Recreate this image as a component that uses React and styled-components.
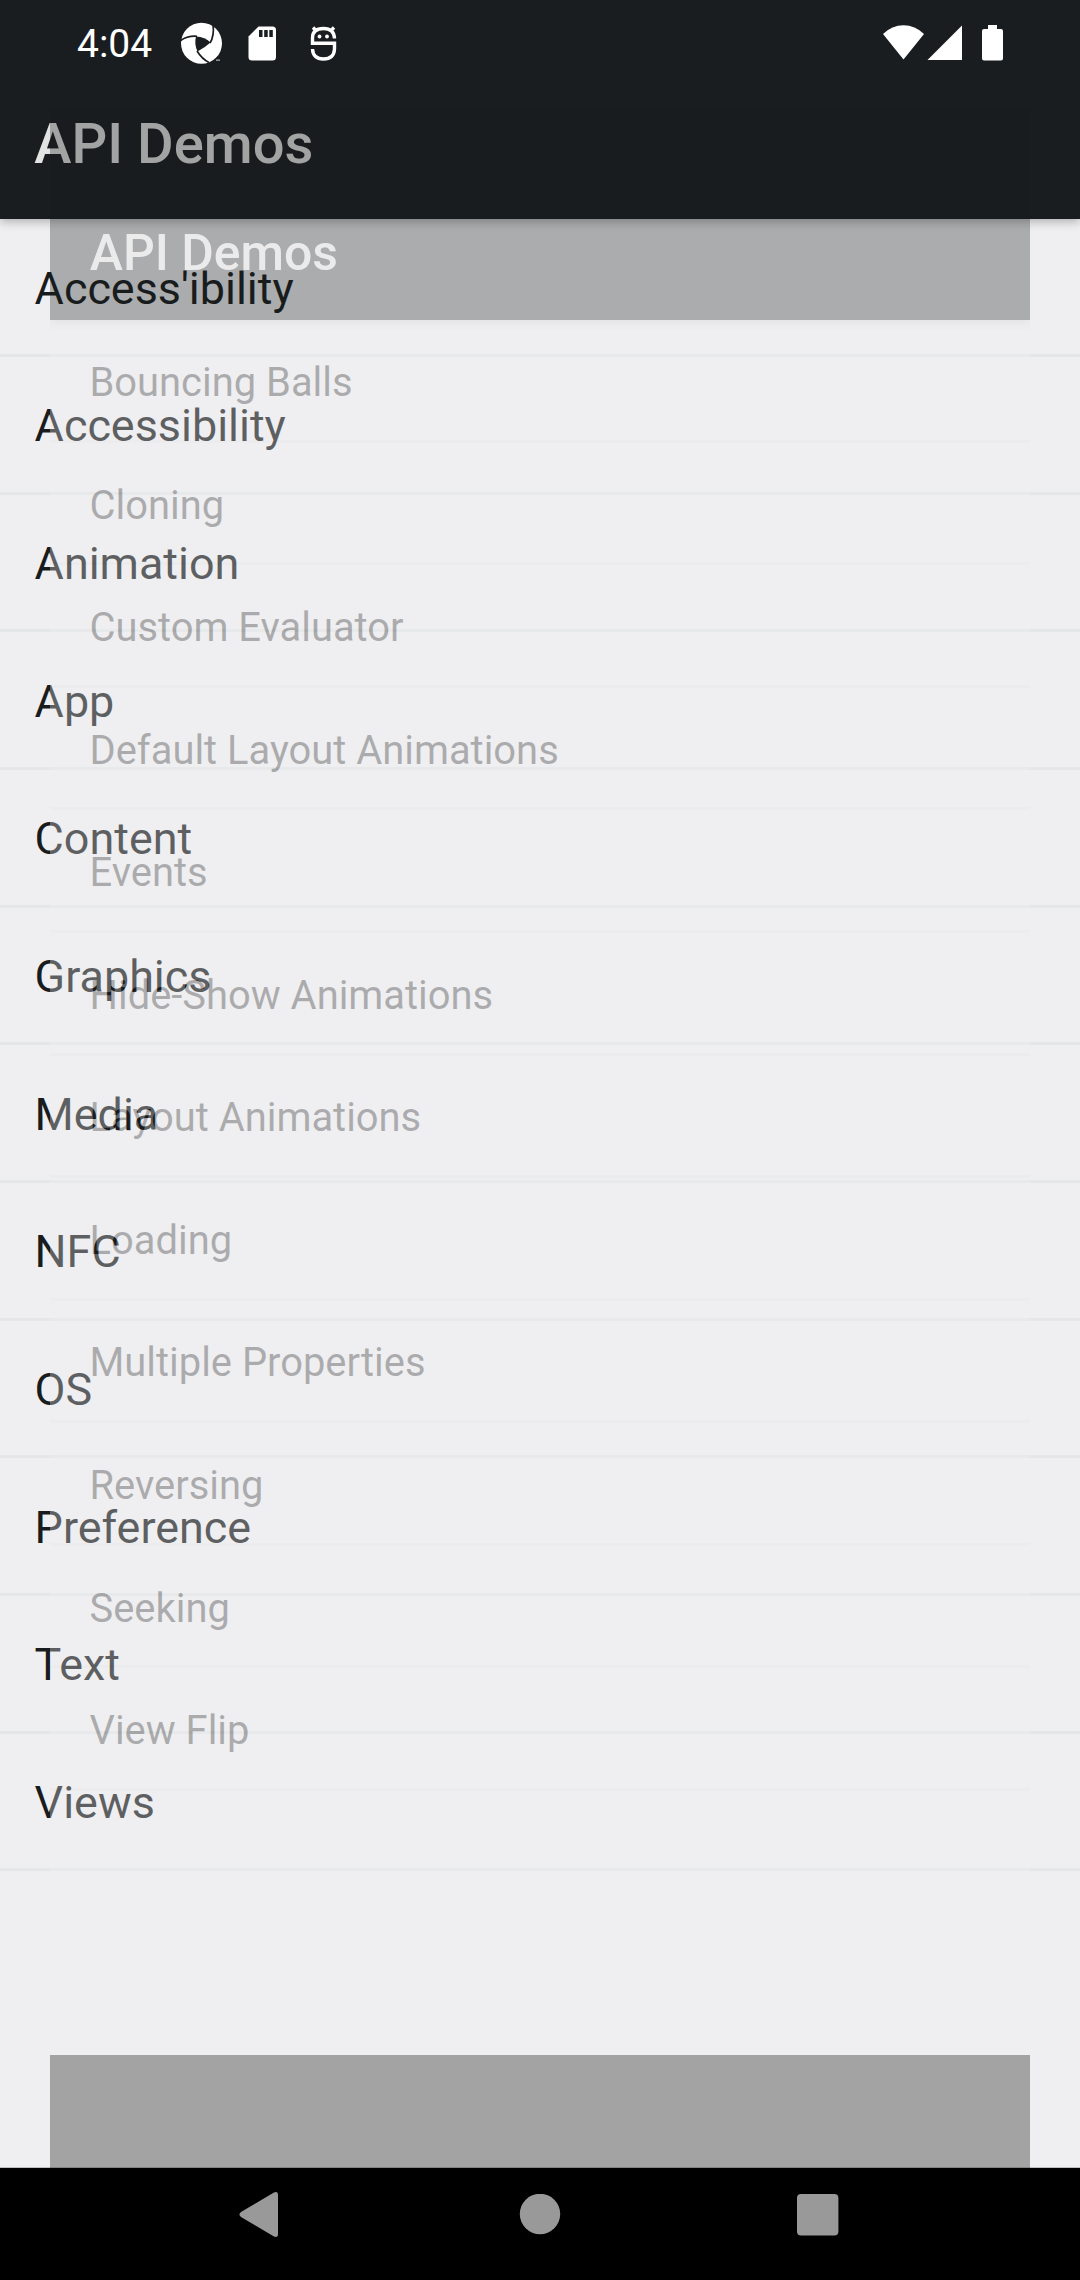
import React from "react";
import styled, { createGlobalStyle } from "styled-components";

const Global = createGlobalStyle`
  html, body { margin: 0; padding: 0; background: #efeff1; }
  * { box-sizing: border-box; }
`;

const Screen = styled.div`
  position: relative;
  display: flex;
  flex-direction: column;
  width: 1080px;
  height: 2280px;
  overflow: hidden;
  background: #efeff1;
  font-family: Roboto, "Noto Sans", sans-serif;
`;

const StatusBar = styled.header`
  position: relative;
  z-index: 3;
  display: flex;
  justify-content: space-between;
  height: 88px;
  padding: 0 76px 0 77px;
  color: #fff;
`;

const Clock = styled.span`
  width: 104px;
  font-size: 39px;
  line-height: 89px;
`;

const StatusGroup = styled.div`
  display: flex;
  align-items: flex-start;
`;

const Glyph = styled.svg`
  display: block;
  flex: none;
  margin-top: 15px;
`;

const Activity = styled.main`
  display: flex;
  flex-direction: column;
  flex: 1;
  margin-top: -88px;
`;

const AppBar = styled.div`
  position: relative;
  height: ${(p) => p.$height}px;
  padding: ${(p) => p.$top}px ${(p) => p.$inset}px 0;
  background: #191d1f;
  color: #e2e3e3;
  box-shadow: 0 2px 10px rgba(0, 0, 0, ${(p) => p.$shade});
`;

const Title = styled.h1`
  margin: 0;
  font-size: ${(p) => p.$size}px;
  font-weight: 500;
  line-height: 66px;
  white-space: nowrap;
`;

const List = styled.ul`
  margin: 0;
  padding: 0;
  list-style: none;
  background: #efeff1;
  flex: 1;
`;

const Item = styled.li`
  display: flex;
  align-items: center;
  height: ${(p) => p.$pitch}px;
  padding: ${(p) => p.$drop}px ${(p) => p.$inset}px 0;
  border-bottom: 3px solid #e5e6e8;
  color: #191c1e;
  font-size: ${(p) => p.$size}px;
  white-space: nowrap;
`;

const EnteringWindow = styled.section`
  position: absolute;
  z-index: 1;
  left: 50px;
  top: 108px;
  width: 980px;
  height: 2100px;
  display: flex;
  flex-direction: column;
  overflow: hidden;
  opacity: 0.32;
`;

const WindowFooter = styled.div`
  height: 153px;
  background: #020203;
`;

const NavBar = styled.nav`
  position: relative;
  z-index: 2;
  display: flex;
  justify-content: space-between;
  align-items: flex-start;
  height: 112px;
  padding: 26px 241px 0 238px;
  background: #000;
  box-shadow: 0 -1px 0 rgba(0, 0, 0, 0.2);
`;

const NavGlyph = styled.svg`
  display: block;
  flex: none;
  fill: #999;
  margin-top: ${(p) => p.$lift || 0}px;
`;

const topics = [
  "Access'ibility", "Accessibility", "Animation", "App", "Content", "Graphics",
  "Media", "NFC", "OS", "Preference", "Text", "Views",
];

const animations = [
  "Bouncing Balls", "Cloning", "Custom Evaluator", "Default Layout Animations",
  "Events", "Hide-Show Animations", "Layout Animations", "Loading",
  "Multiple Properties", "Reversing", "Seeking", "View Flip",
];

function DemoList({ items, ...metrics }) {
  return (
    <List>
      {items.map((label) => (
        <Item key={label} {...metrics}>{label}</Item>
      ))}
    </List>
  );
}

export default function App() {
  return (
    <Screen>
      <Global />
      <StatusBar>
        <StatusGroup>
          <Clock>4:04</Clock>
          <Glyph width="170" height="56" viewBox="181 15 170 56">
            <circle cx="201.5" cy="43.3" r="20.5" fill="#fff" />
            <path d="M196 36.5Q205 37 210.5 42.5Q205 47.5 197.5 51.5Q194 44 196 36.5Z" fill="#191d1f" />
            <g fill="none" stroke="#191d1f" strokeWidth="1.7">
              <path d="M180.5 40.5Q188 35.5 197 36.3" />
              <path d="M213 24Q214.5 36 210 43" />
              <path d="M197 51Q202 59 209 62.5" />
            </g>
            <path d="M211 64L218 56L222 60L216 66Z" fill="#191d1f" />
            <path d="M216 59.5h4v1.3h-4z" fill="#aaa" />
            <path d="M258.5 26.5H272.5Q276 26.5 276 30V57Q276 60.5 272.5 60.5H252Q248.5 60.5 248.5 57V36.5Z" fill="#fff" />
            <path d="M259 30h3.5v7h-3.5zM264.200 30h3.5v7h-3.5zM269.300 30h3.5v7h-3.5z" fill="#191d1f" />
            <g fill="none" stroke="#fff" strokeWidth="3.4">
              <path d="M334.5 38.5Q334 28.5 323.5 28.5Q312.5 28.5 312.5 38V43.3H334.5V49Q334 59 323.5 59Q313 59 312.5 49" />
              <path d="M313 27.5l3.5 3.5M334 27.5l-3.5 3.5" />
            </g>
            <circle cx="319.5" cy="36.5" r="1.9" fill="#fff" />
            <circle cx="327" cy="36.5" r="1.9" fill="#fff" />
          </Glyph>
        </StatusGroup>
        <StatusGroup>
          <Glyph width="134" height="56" viewBox="870 15 134 56" fill="#fff">
            <path d="M883 34Q892 25.3 903.5 25.3T924 34L903.5 59.5Z" />
            <path d="M927.5 60L962 25.5V60Z" />
            <path d="M988 25h9v4h4q2 0 2 2V58.5q0 2-2 2H984q-2 0-2-2V31q0-2 2-2h4z" />
          </Glyph>
        </StatusGroup>
      </StatusBar>
      <Activity>
        <AppBar $height={219.3} $top={111} $inset={34.3} $shade={0.3}>
          <Title $size={56.1}>API Demos</Title>
        </AppBar>
        <DemoList items={topics} $pitch={137.67} $inset={34.6} $drop={3.4} $size={44.9} />
      </Activity>
      <EnteringWindow>
        <AppBar $height={212.3} $top={112} $inset={39.8} $shade={0.2}>
          <Title $size={49.9}>API Demos</Title>
        </AppBar>
        <DemoList items={animations} $pitch={122.55} $inset={39.5} $drop={5} $size={39.9} />
        <WindowFooter />
      </EnteringWindow>
      <NavBar>
        <NavGlyph $lift={-2} width="45" height="46" viewBox="0 0 45 46">
          <path d="M3 20L36 0.5Q40 -1 40 3V42Q40 46 36 44.500L3 25Q0 22.5 3 20Z" />
        </NavGlyph>
        <NavGlyph width="42" height="42" viewBox="0 0 42 42"><circle cx="21" cy="20" r="20.2" /></NavGlyph>
        <NavGlyph width="42" height="42" viewBox="0 0 42 42"><rect width="41.4" height="41.4" rx="4" /></NavGlyph>
      </NavBar>
    </Screen>
  );
}
